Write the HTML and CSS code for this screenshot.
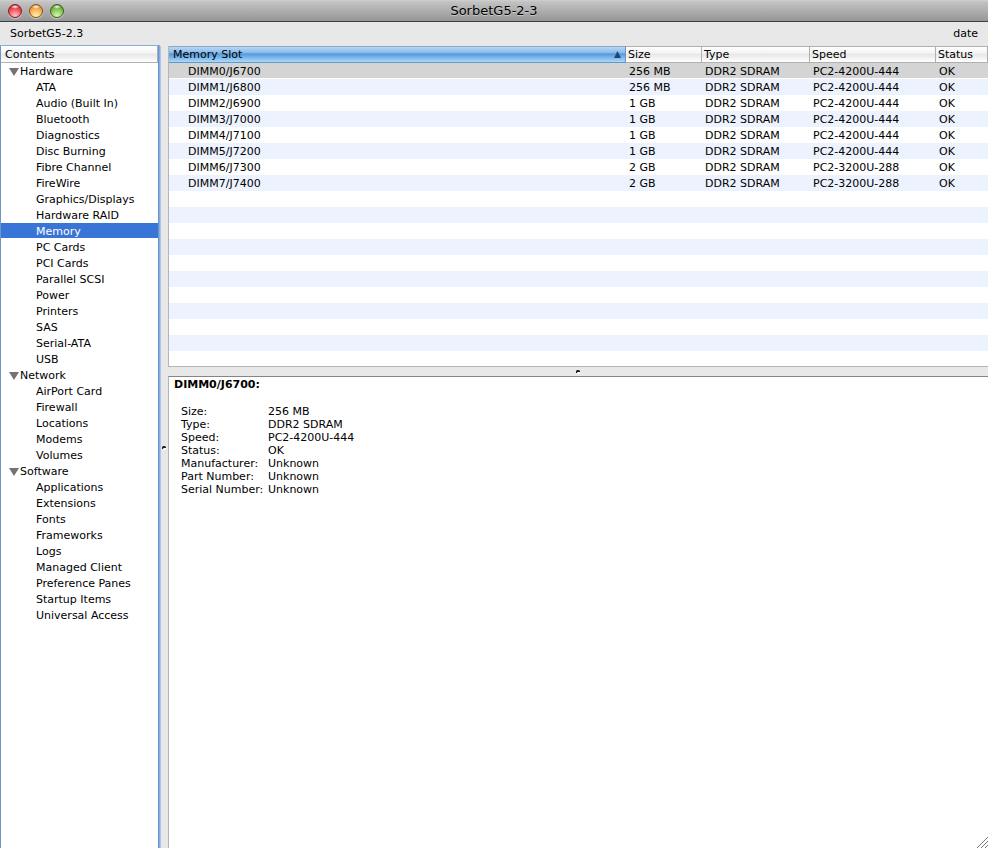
FILE: index.html
```
<!DOCTYPE html>
<html lang="en">
<head>
    <meta charset="UTF-8">
    <meta name="viewport" content="width=device-width, initial-scale=1.0">
    <title>SorbetG5-2-3</title>
    <link rel="stylesheet" href="styles.css">
</head>
<body>

    <header class="titlebar">
        <div class="lights">
            <button class="light red" aria-label="Close"></button>
            <button class="light yellow" aria-label="Minimize"></button>
            <button class="light green" aria-label="Zoom"></button>
        </div>
        <h1>SorbetG5-2-3</h1>
    </header>

    <div class="infobar">
        <span>SorbetG5-2.3</span>
        <span>date</span>
    </div>

    <main class="panes">
        <nav class="sidebar">
            <div class="sidebar-title">Contents</div>
            <details open>
                <summary>Hardware</summary>
                <a href="#">ATA</a>
                <a href="#">Audio (Built In)</a>
                <a href="#">Bluetooth</a>
                <a href="#">Diagnostics</a>
                <a href="#">Disc Burning</a>
                <a href="#">Fibre Channel</a>
                <a href="#">FireWire</a>
                <a href="#">Graphics/Displays</a>
                <a href="#">Hardware RAID</a>
                <a href="#" class="selected">Memory</a>
                <a href="#">PC Cards</a>
                <a href="#">PCI Cards</a>
                <a href="#">Parallel SCSI</a>
                <a href="#">Power</a>
                <a href="#">Printers</a>
                <a href="#">SAS</a>
                <a href="#">Serial-ATA</a>
                <a href="#">USB</a>
            </details>
            <details open>
                <summary>Network</summary>
                <a href="#">AirPort Card</a>
                <a href="#">Firewall</a>
                <a href="#">Locations</a>
                <a href="#">Modems</a>
                <a href="#">Volumes</a>
            </details>
            <details open>
                <summary>Software</summary>
                <a href="#">Applications</a>
                <a href="#">Extensions</a>
                <a href="#">Fonts</a>
                <a href="#">Frameworks</a>
                <a href="#">Logs</a>
                <a href="#">Managed Client</a>
                <a href="#">Preference Panes</a>
                <a href="#">Startup Items</a>
                <a href="#">Universal Access</a>
            </details>
        </nav>

        <div class="splitter vertical">
            <svg width="6" height="5" viewBox="0 0 6 5"><path d="M1 4V2L2 1H4L5 2V3H3L2 4Z" fill="#222"/><path d="M2 4L3 3H5V4L4 5H2Z" fill="#fff"/></svg>
        </div>

        <div class="content">
            <section class="slots">
                <table>
                    <thead>
                        <tr>
                            <th class="sorted"><button>Memory Slot <svg width="7" height="7" viewBox="0 0 7 7"><path d="M3.5 0L7 7H0Z" fill="#24466e"/></svg></button></th>
                            <th class="size"><button>Size</button></th>
                            <th class="type"><button>Type</button></th>
                            <th class="speed"><button>Speed</button></th>
                            <th class="status"><button>Status</button></th>
                        </tr>
                    </thead>
                    <tbody>
                        <tr class="selected"><td>DIMM0/J6700</td><td>256 MB</td><td>DDR2 SDRAM</td><td>PC2-4200U-444</td><td>OK</td></tr>
                        <tr><td>DIMM1/J6800</td><td>256 MB</td><td>DDR2 SDRAM</td><td>PC2-4200U-444</td><td>OK</td></tr>
                        <tr><td>DIMM2/J6900</td><td>1 GB</td><td>DDR2 SDRAM</td><td>PC2-4200U-444</td><td>OK</td></tr>
                        <tr><td>DIMM3/J7000</td><td>1 GB</td><td>DDR2 SDRAM</td><td>PC2-4200U-444</td><td>OK</td></tr>
                        <tr><td>DIMM4/J7100</td><td>1 GB</td><td>DDR2 SDRAM</td><td>PC2-4200U-444</td><td>OK</td></tr>
                        <tr><td>DIMM5/J7200</td><td>1 GB</td><td>DDR2 SDRAM</td><td>PC2-4200U-444</td><td>OK</td></tr>
                        <tr><td>DIMM6/J7300</td><td>2 GB</td><td>DDR2 SDRAM</td><td>PC2-3200U-288</td><td>OK</td></tr>
                        <tr><td>DIMM7/J7400</td><td>2 GB</td><td>DDR2 SDRAM</td><td>PC2-3200U-288</td><td>OK</td></tr>
                    </tbody>
                </table>
            </section>

            <div class="splitter horizontal">
                <svg width="6" height="5" viewBox="0 0 6 5"><path d="M1 4V2L2 1H4L5 2V3H3L2 4Z" fill="#222"/><path d="M2 4L3 3H5V4L4 5H2Z" fill="#fff"/></svg>
            </div>

            <section class="info">
                <h2>DIMM0/J6700:</h2>
                <dl>
                    <dt>Size:</dt><dd>256 MB</dd>
                    <dt>Type:</dt><dd>DDR2 SDRAM</dd>
                    <dt>Speed:</dt><dd>PC2-4200U-444</dd>
                    <dt>Status:</dt><dd>OK</dd>
                    <dt>Manufacturer:</dt><dd>Unknown</dd>
                    <dt>Part Number:</dt><dd>Unknown</dd>
                    <dt>Serial Number:</dt><dd>Unknown</dd>
                </dl>
                <svg class="grip" width="12" height="12" viewBox="0 0 12 12"><path d="M1 12L12 1M5 12L12 5M9 12L12 9" stroke="#777" fill="none"/></svg>
            </section>
        </div>
    </main>

</body>
</html>
```
FILE: styles.css
```
* {
    box-sizing: border-box;
}
body {
    margin: 0;
    height: 100vh;
    display: flex;
    flex-direction: column;
    overflow: hidden;
    background: #e8e8e8;
    color: #000;
    font-family: "Lucida Grande", "DejaVu Sans", sans-serif;
    font-size: 11px;
    line-height: 16px;
}
button {
    border: none;
    padding: 0;
    background: none;
    color: inherit;
    font: inherit;
}

/* title bar */
.titlebar {
    display: grid;
    grid-template-columns: 1fr auto 1fr;
    align-items: center;
    height: 22px;
    flex-shrink: 0;
    padding: 0 8px;
    background: linear-gradient(#d0d0d0, #c2c2c2 10%, #969696);
    border-bottom: 1px solid #404040;
}
.titlebar h1 {
    margin: 0;
    font-size: 13px;
    font-weight: normal;
    text-shadow: 0 1px 0 rgba(255, 255, 255, 0.4);
}
.lights {
    display: flex;
    gap: 7px;
}
.light {
    width: 14px;
    height: 14px;
    border: 1px solid;
    border-radius: 50%;
    box-shadow: 0 1px 1px rgba(255, 255, 255, 0.5);
}
.red {
    border-color: #7b2023;
    background: radial-gradient(ellipse 4px 2px at 50% 15%, #fff, transparent), radial-gradient(circle at 50% 90%, #ffc4c4, #ee4a50 60%, #b01c24);
}
.yellow {
    border-color: #8a5420;
    background: radial-gradient(ellipse 4px 2px at 50% 15%, #fff, transparent), radial-gradient(circle at 50% 90%, #fff4b0, #f6aa4c 60%, #bf6a20);
}
.green {
    border-color: #38601c;
    background: radial-gradient(ellipse 4px 2px at 50% 15%, #fff, transparent), radial-gradient(circle at 50% 90%, #dcf8b0, #7cbf4a 60%, #40781c);
}

.infobar {
    display: flex;
    justify-content: space-between;
    flex-shrink: 0;
    height: 24px;
    padding: 4px 10px;
}
.panes {
    display: flex;
    flex: 1;
    min-height: 0;
}

/* contents list, with its focus ring */
.sidebar {
    flex: 0 0 159px;
    background: #fff;
    border-left: 1px solid #7096c4;
    border-right: 1px solid #6b95ca;
    box-shadow: 0 0 0 1px #84aedd, 2px 0 0 #a9c8ea;
}
.sidebar-title,
th {
    height: 17px;
    background: linear-gradient(#fff, #f4f4f4 45%, #e6e6e6 50%, #fff);
    border-bottom: 1px solid #b0b0b0;
}
.sidebar-title {
    padding: 2px 0 0 4px;
    border-right: 1px solid #b0b0b0;
    line-height: 14px;
}
summary {
    display: flex;
    align-items: center;
    gap: 1px;
    height: 16px;
    padding: 2px 0 0 8px;
    line-height: 14px;
    list-style: none;
}
summary::before {
    content: "";
    border: 5px solid transparent;
    border-top: 8px solid #737373;
    border-bottom: 0;
}
.sidebar a {
    display: block;
    height: 16px;
    padding: 2px 0 0 35px;
    line-height: 14px;
    color: #000;
    text-decoration: none;
}
.sidebar a.selected {
    background: #3875d7;
    box-shadow: inset 0 -1px #fff;
    color: #fff;
}

.splitter {
    display: flex;
    align-items: center;
    justify-content: center;
    flex-shrink: 0;
}
.vertical {
    width: 9px;
}
.horizontal {
    height: 9px;
}
.content {
    display: flex;
    flex-direction: column;
    flex: 1;
    min-width: 0;
}

/* memory slots */
.slots {
    flex: 0 0 40%;
    overflow: hidden;
    border-left: 1px solid #b5b5b5;
    border-bottom: 1px solid #b5b5b5;
    background: repeating-linear-gradient(#fff 0 16px, #edf3fe 16px 32px) 0 17px;
}
table {
    width: 100%;
    table-layout: fixed;
    border-collapse: separate;
    border-spacing: 0;
}
th {
    padding: 0;
    border-right: 1px solid #b0b0b0;
    box-shadow: inset 0 1px #b0b0b0;
    font-weight: normal;
    text-align: left;
    line-height: 15px;
}
th button {
    display: flex;
    align-items: center;
    justify-content: space-between;
    width: 100%;
    height: 16px;
    padding: 0 4px 0 2px;
}
th.sorted {
    background: linear-gradient(#c0dbf4, #8dbdeb 40%, #5698dd 50%, #a8dcfc);
    border-color: #6d94bf;
    box-shadow: inset 0 1px #8ba6c6;
}
th.sorted button {
    padding-left: 4px;
}
.size {
    width: 76px;
}
.type {
    width: 108px;
}
.speed {
    width: 126px;
}
.status {
    width: 52px;
}
td {
    height: 16px;
    padding: 2px 0 0 3px;
    line-height: 14px;
    white-space: nowrap;
}
td:first-child {
    padding-left: 19px;
}
tr.selected td {
    background: #d4d4d4;
    box-shadow: inset 0 -1px #fff;
}

/* selected item */
.info {
    position: relative;
    flex: 1;
    padding: 0 5px;
    background: #fff;
    border-top: 1px solid #858585;
    border-left: 1px solid #b5b5b5;
}
.info h2 {
    margin: 0 0 12px;
    font-size: 11px;
}
.info dl {
    display: grid;
    grid-template-columns: 87px 1fr;
    margin: 0;
    padding-left: 7px;
    line-height: 13px;
}
.info dd {
    margin: 0;
}
.grip {
    position: absolute;
    right: 0;
    bottom: 0;
}
```
